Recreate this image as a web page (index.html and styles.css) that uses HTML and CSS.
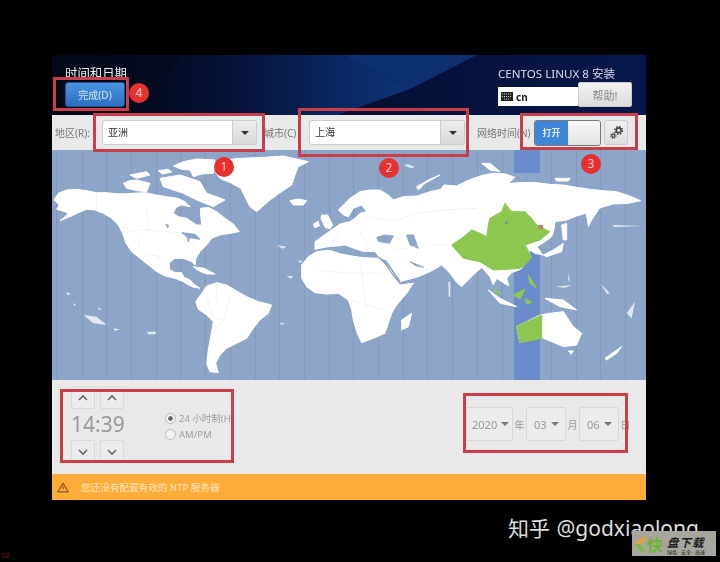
FILE: index.html
```html
<!DOCTYPE html>
<html lang="zh-CN">
<head>
  <meta charset="UTF-8">
  <meta name="viewport" content="width=device-width, initial-scale=1.0">
  <title>时间和日期</title>
  <link rel="stylesheet" href="styles.css">
</head>
<body>
  <div class="window">
    <header class="header">
      <svg class="header-art" viewBox="0 0 594 60" preserveAspectRatio="none">
        <defs>
          <linearGradient id="art" x1="0" x2="1" y1="0" y2="0">
            <stop offset="0" stop-color="#06103a" stop-opacity="0"/>
            <stop offset="0.7" stop-color="#0a2560"/>
            <stop offset="1" stop-color="#0e3478"/>
          </linearGradient>
        </defs>
        <polygon points="130,0 291,0 358,34 285,60 90,60" fill="url(#art)"/>
        <polygon points="291,0 425,0 358,34" fill="#0c2f70"/>
      </svg>
      <div class="header-left">
        <h1 class="title">时间和日期</h1>
        <button class="done">完成(D)</button>
      </div>
      <div class="header-right">
        <div class="product">CENTOS LINUX 8 安装</div>
        <div class="header-row">
          <div class="layout">
            <svg class="kbd" viewBox="0 0 12 9"><rect width="12" height="9" fill="#222"/><path d="M1 2h10M1 4.5h10M3 7h6" stroke="#ddd" stroke-width="1" stroke-dasharray="1 1" fill="none"/></svg>
            <span>cn</span>
          </div>
          <button class="help">帮助!</button>
        </div>
      </div>
    </header>

    <div class="toolbar">
      <label class="tool-label region-label">地区(R):</label>
      <div class="combo region"><span>亚洲</span><i class="combo-arrow"></i></div>
      <label class="tool-label city-label">城市(C)</label>
      <div class="combo city"><span>上海</span><i class="combo-arrow"></i></div>
      <label class="tool-label net-label">网络时间(N)</label>
      <div class="switch"><span class="switch-on">打开</span><span class="switch-off"></span></div>
      <button class="gear">
        <svg viewBox="0 0 16 16" width="15" height="15">
          <circle cx="10.3" cy="5.7" r="2.6" fill="none" stroke="#444" stroke-width="1.8"/>
          <circle cx="10.3" cy="5.7" r="4.2" fill="none" stroke="#444" stroke-width="1.4" stroke-dasharray="1.6 1.7"/>
          <circle cx="4.6" cy="11.4" r="1.7" fill="none" stroke="#444" stroke-width="1.4"/>
          <circle cx="4.6" cy="11.4" r="3" fill="none" stroke="#444" stroke-width="1" stroke-dasharray="1.2 1.2"/>
        </svg>
      </button>
    </div>

    <div class="map">
      <svg class="map-art" viewBox="0 0 594 230">
        <rect x="462" y="0" width="26" height="23" fill="#6a8ccb"/>
        <rect x="462" y="95" width="26" height="135" fill="#6a8ccb"/>

        <!-- americas, greenland -->
        <g transform="translate(-2 0) scale(.3333)" class="land">
          <path d="M12 150L25 130 50 120 80 118 110 122 140 128 170 128 210 132 245 130 285 128 320 135 350 140 385 145 405 155 420 170 395 165 378 172 370 190 385 200 410 205 440 225 455 225 452 195 452 175 475 172 500 185 525 205 550 222 568 245 540 250 510 255 485 265 470 285 450 305 438 325 435 345 425 335 400 325 375 325 358 338 358 358 375 368 395 368 402 382 420 390 435 405 450 415 425 410 400 395 375 385 345 378 320 365 295 345 270 325 245 305 228 280 218 250 205 225 185 205 160 190 135 180 110 178 85 188 60 200 30 212 55 192 45 185 20 178 28 165Z"/>
          <path d="M220 100L240 92 260 90 300 100 290 125 260 122 230 115Z"/>
          <path d="M240 75L290 65 300 75 260 85Z"/>
          <path d="M325 62l30-4 10 8-28 6Z"/>
          <path d="M370 48L400 35 440 27 495 30 490 70 455 72 430 80 420 60 395 58Z"/>
          <path d="M330 85L390 75 430 88 450 95 470 130 500 140 525 150 490 170 465 160 440 150 400 130 340 110Z"/>
          <path d="M495 45L520 30 570 25 640 22 700 18 775 35 745 50 735 75 725 105 695 125 660 150 620 185 600 170 585 140 572 115 545 100 510 85 495 65Z"/>
          <path d="M720 152L745 147 770 152 760 165 730 165Z"/>
          <path d="M437 455L455 430 470 408 500 398 530 405 555 420 590 440 625 455 665 465 655 490 630 510 610 535 590 565 560 580 530 595 510 615 497 640 505 668 480 665 470 640 475 600 482 560 490 515 470 495 445 478Z"/>
          <path d="M430 350L462 355 495 372 470 372 445 362Z"/>
          <path d="M790 222l15-8 3 14-14 5Z"/>
          <path d="M100 495L140 500 170 525 130 520ZM70 460l8 3-5 6ZM190 535l20 3-15 5ZM50 425l12 8-10 3ZM145 472l10 6-10 2ZM290 545l30 0-5 8-20 0ZM710 378l20 0-8 8ZM690 518l15 2-10 5ZM680 285l30 5-12 6ZM745 330l15 5-12 3Z" class="isles"/>
          <path d="M395 248l40 5 15 15-30-5-5 12-5-15ZM348 222l8 4-3 8Z" class="lake"/>
          <path d="M140 128L140 182M218 245L280 240 360 245 395 250M290 175L295 240M260 265L275 310 330 320 370 330M410 260L440 300M470 440L490 510 520 510 540 440M480 560L530 500M500 400L500 455" class="border"/>
        </g>
        <!-- europe, asia, africa, oceania -->
        <g transform="translate(298 0) scale(.3333)" class="land">
          <path d="M-105 275L-70 250 -30 222 0 215 15 205 30 190 50 185 35 165 10 175 -5 200 -20 195 -35 180 -15 160 0 145 30 125 60 120 90 120 115 135 130 150 160 140 200 138 240 125 272 118 282 105 320 108 345 95 370 85 400 75 430 70 465 72 495 82 475 100 510 98 550 97 600 103 640 105 680 112 720 118 760 122 800 125 840 138 872 152 835 160 790 162 755 172 730 185 715 215 708 190 680 198 650 210 615 215 612 240 605 260 585 275 562 290 578 315 555 310 540 300 530 335 512 358 485 368 470 385 477 408 455 395 440 385 430 405 420 380 395 352 370 375 335 410 318 395 300 370 275 345 240 365 205 380 150 395 125 365 105 330 80 315 70 305 40 305 10 295 -15 285 -50 290 -75 292 -105 298Z"/>
          <path d="M-145 345L-125 320 -100 305 -60 300 -30 310 0 315 40 320 70 318 85 325 105 345 125 375 150 405 190 400 170 430 140 465 125 490 115 520 105 550 70 565 35 578 20 545 10 510 5 480 -5 450 -35 430 -70 432 -105 428 -130 410 -145 385Z"/>
          <path d="M-85 195l18 0 15 30-8 12-15-5-12-25Z"/>
          <path d="M-80 296L-50 292 -15 290 10 298 40 308 75 308 85 322 40 320 0 314 -30 308 -60 298ZM80 262L105 255 130 258 118 280 85 274ZM170 255L190 255 205 295 180 285ZM180 335L220 352 195 346Z" class="lake"/>
          <path d="M105 330L150 395" class="strait"/>
          <path d="M155 510L185 490 175 530 155 540Z"/>
          <path d="M580 315L610 300 640 280 635 305 590 320Z"/>
          <path d="M635 225L650 220 650 270 640 270Z"/>
          <path d="M710 190L745 180 725 210 715 230Z"/>
          <path d="M200 110L235 90 270 75 225 100 205 120Z"/>
          <path d="M395 40L420 40 450 65 420 60Z"/>
          <path d="M615 85l45 0-5 8-35 0Z"/>
          <path d="M415 420L450 445 500 470 450 460Z"/>
          <path d="M585 445L640 450 680 480 630 470Z"/>
          <path d="M500 530L570 495 600 490 640 485 670 530 695 550 680 585 640 590 570 560 510 578Z"/>
          <path d="M655 603l15 0-6 10Z"/>
          <path d="M765 625L815 590 800 610 770 630Z"/>
          <path d="M160 45l15-2 20 8-12 4ZM295 395l6 0 0 45-5 0ZM790 225l90 3-90 3ZM750 400l30 30-8 2ZM830 490l25-35-10 50ZM615 410l50-5-20 8ZM655 365l5 30-5-5Z" class="isles"/>
          <path d="M60 200L130 215 200 190 280 180 380 175M-60 290L-30 240M30 240L60 300M130 300L220 285 300 285M-100 360L0 370 100 370M30 330L50 480M0 450L100 480" class="border"/>
          <g class="green">
            <path d="M305 285L335 265 365 240 390 250 410 260 415 225 420 205 455 185 465 160 485 185 525 185 545 205 560 225 600 245 570 270 525 285 545 320 525 345 510 355 470 358 430 360 390 335 340 325Z"/>
            <path d="M500 530L575 495 575 565 510 578Z"/>
            <path d="M535 375l25 40-20-15ZM490 435l35-18-15 30ZM525 445l20 12-15 5ZM435 418l15 10-8 5Z"/>
          </g>
          <path d="M465 220l8-10-2 14Z" class="tiny-lake"/>
          <circle cx="573" cy="231" r="7" class="pin"/>
          <circle cx="573" cy="231" r="3" class="pin-core"/>
        </g>
      </svg>
    </div>

    <div class="controls">
      <div class="clock">
        <div class="spin-row">
          <button class="spin"><svg class="chev" viewBox="0 0 12 8"><path d="M2 6l4-4 4 4"/></svg></button>
          <button class="spin"><svg class="chev" viewBox="0 0 12 8"><path d="M2 6l4-4 4 4"/></svg></button>
        </div>
        <div class="time">14:39</div>
        <div class="spin-row">
          <button class="spin"><svg class="chev" viewBox="0 0 12 8"><path d="M2 2l4 4 4-4"/></svg></button>
          <button class="spin"><svg class="chev" viewBox="0 0 12 8"><path d="M2 2l4 4 4-4"/></svg></button>
        </div>
      </div>
      <div class="format">
        <div class="radio-row"><i class="radio radio-on"></i><span>24 小时制(H)</span></div>
        <div class="radio-row"><i class="radio"></i><span>AM/PM</span></div>
      </div>
      <div class="date">
        <div class="pick pick-year"><span>2020</span><i class="pick-arrow"></i></div>
        <span class="date-unit">年</span>
        <div class="pick"><span>03</span><i class="pick-arrow"></i></div>
        <span class="date-unit">月</span>
        <div class="pick"><span>06</span><i class="pick-arrow"></i></div>
        <span class="date-unit">日</span>
      </div>
    </div>

    <div class="warning">
      <svg class="warn-icon" viewBox="0 0 14 12"><path d="M7 1L13 11H1Z" fill="none" stroke="#8a5a20" stroke-width="1.4"/><path d="M7 4.5v3.5" stroke="#c0392b" stroke-width="1.4"/></svg>
      <span>您还没有配置有效的 NTP 服务器</span>
    </div>
  </div>

  <div class="mark box-4"></div>
  <div class="mark box-1"></div>
  <div class="mark box-2"></div>
  <div class="mark box-3"></div>
  <div class="mark box-time"></div>
  <div class="mark box-date"></div>
  <div class="dot dot-1">1</div>
  <div class="dot dot-2">2</div>
  <div class="dot dot-3">3</div>
  <div class="dot dot-4">4</div>

  <div class="credit">知乎 @godxiaolong</div>
  <div class="logo">
    <svg class="logo-icon" viewBox="0 0 14 20"><polygon points="13,1 2,11 8,11 13,6" fill="#f0a030"/><polygon points="2,11 8,11 13,19 8,19" fill="#7fb83a"/></svg>
    <span class="logo-kuai">快</span>
    <div class="logo-text">
      <div class="logo-name">盘下载</div>
      <div class="logo-sub">绿色 · 安全 · 高速</div>
    </div>
  </div>
  <div class="corner">sd:</div>
</body>
</html>
```

FILE: styles.css
```css
* {
  box-sizing: border-box;
}

html, body {
  height: 100%;
}

body {
  margin: 0;
  padding: 55px 74px 0 52px;
  background: #000;
  font-family: "Noto Sans", "Noto Sans CJK SC", sans-serif;
  overflow: hidden;
  position: relative;
}

button {
  font-family: inherit;
  padding: 0;
}

.window {
  width: 594px;
  height: 445px;
  display: flex;
  flex-direction: column;
  filter: blur(0.35px);
}

/* header */

.header {
  height: 60px;
  padding: 11px 14px 8px 13px;
  display: flex;
  justify-content: space-between;
  background: linear-gradient(to right, #030816, #040d2c 40%, #06133f 75%, #08184c);
  position: relative;
}

.header-art {
  position: absolute;
  left: 0;
  top: 0;
  width: 100%;
  height: 100%;
}

.header-left, .header-right {
  position: relative;
}

.title {
  margin: 0;
  font-size: 12.4px;
  font-weight: normal;
  line-height: 16px;
  color: #eee;
}

.done {
  display: block;
  width: 60px;
  height: 25px;
  border: 1px solid #1f4f90;
  border-radius: 3px;
  background: linear-gradient(#4a94e0, #2c6fc0);
  color: #d5e6f8;
  font-size: 10px;
}

.header-right {
  width: 134px;
}

.product {
  font-size: 11.6px;
  line-height: 16px;
  color: #dde;
  white-space: nowrap;
}

.header-row {
  display: flex;
  align-items: flex-end;
  height: 25px;
}

.layout {
  width: 80px;
  height: 19px;
  margin-bottom: 1px;
  padding-left: 3px;
  background: #fff;
  display: flex;
  align-items: center;
  gap: 3px;
  font-size: 10px;
  font-weight: bold;
  color: #222;
}

.kbd {
  width: 12px;
  height: 9px;
}

.help {
  width: 54px;
  height: 25px;
  border: 1px solid #ccc;
  border-radius: 2px;
  background: linear-gradient(#f2f2f2, #dcdcdc);
  color: #888;
  font-size: 11px;
}

/* toolbar */

.toolbar {
  height: 35px;
  display: flex;
  align-items: center;
  background: #e9e9e9;
  padding: 0 18px 0 3px;
}

.tool-label {
  font-size: 10px;
  color: #777;
  white-space: nowrap;
}

.region-label {
  width: 47px;
}

.city-label {
  width: 45px;
  margin-left: 7px;
}

.net-label {
  width: 57px;
  margin-left: 12px;
}

.combo {
  height: 25px;
  display: flex;
  justify-content: space-between;
  background: #fff;
  border: 1px solid #ccc;
  border-radius: 3px;
  font-size: 10px;
  color: #333;
}

.combo span {
  padding-left: 5px;
  line-height: 23px;
}

.region {
  width: 155px;
}

.city {
  width: 156px;
}

.combo-arrow {
  width: 24px;
  background: linear-gradient(#eee, #d8d8d8);
  border-left: 1px solid #ccc;
  position: relative;
}

.combo-arrow::after {
  content: "";
  position: absolute;
  left: 8px;
  top: 10px;
  border: 4px solid transparent;
  border-top: 4px solid #333;
  border-bottom: 0;
}

.switch {
  width: 67px;
  height: 26px;
  display: flex;
  border: 1px solid #777;
  border-radius: 3px;
  overflow: hidden;
}

.switch-on {
  width: 33px;
  background: #3f86d6;
  color: #e6f0fa;
  font-size: 9px;
  font-weight: bold;
  line-height: 24px;
  text-align: center;
}

.switch-off {
  flex: 1;
  background: linear-gradient(#f7f7f7, #e2e2e2);
}

.gear {
  width: 24px;
  height: 25px;
  margin-left: 3px;
  border: 1px solid #ccc;
  border-radius: 3px;
  background: linear-gradient(#f0f0f0, #dedede);
  display: flex;
  align-items: center;
  justify-content: center;
}

/* map */

.map {
  height: 230px;
  background-color: #8da5c8;
  background-image: repeating-linear-gradient(to right, transparent 0, transparent 23.7px, #8199bd 23.7px, #8199bd 24.7px);
  background-position: 6px 0;
}

.map-art {
  display: block;
  width: 594px;
  height: 230px;
  filter: blur(0.4px);
}

.land path {
  fill: #fff;
  stroke: #fff;
  stroke-width: 3;
  stroke-linejoin: round;
}

.land .isles {
  opacity: 0.75;
  stroke: none;
}

.land .lake {
  fill: #8da5c8;
  stroke: #8da5c8;
}

.land .strait {
  fill: none;
  stroke: #8da5c8;
  stroke-width: 5;
}

.land .border {
  fill: none;
  stroke: #e2e4e8;
  stroke-width: 1.5;
}

.land .green path {
  fill: #8cc850;
  stroke: #8cc850;
}

.land .tiny-lake {
  fill: #5f87b8;
  stroke: none;
}

.pin {
  fill: #d8605a;
}

.pin-core {
  fill: #8cc850;
}

/* time and date */

.controls {
  height: 94px;
  padding-top: 6px;
  display: flex;
  background: #e9e9e9;
}

.clock {
  margin-left: 19px;
  width: 54px;
}

.spin-row {
  display: flex;
  gap: 5px;
}

.spin {
  width: 24px;
  height: 23px;
  border: 1px solid #dadada;
  border-radius: 2px;
  background: #ececec;
  display: flex;
  align-items: center;
  justify-content: center;
}

.chev {
  width: 12px;
  height: 8px;
}

.chev path {
  fill: none;
  stroke: #666;
  stroke-width: 1.6;
}

.time {
  height: 31px;
  font-size: 21px;
  line-height: 31px;
  color: #999;
  white-space: nowrap;
}

.format {
  margin-left: 40px;
  margin-top: 24px;
  width: 69px;
  overflow: hidden;
}

.radio-row {
  height: 16px;
  display: flex;
  align-items: center;
  gap: 3px;
  font-size: 9.5px;
  color: #a0a0a0;
  white-space: nowrap;
}

.radio {
  flex: none;
  width: 11px;
  height: 11px;
  border: 1px solid #bbb;
  border-radius: 50%;
  background: #f2f2f2;
}

.radio-on {
  background: radial-gradient(circle, #666 0 2px, #f2f2f2 2.5px);
}

.date {
  margin-left: 232px;
  margin-top: 21px;
  height: 34px;
  display: flex;
  align-items: center;
  font-size: 11px;
  color: #999;
}

.pick {
  width: 40px;
  height: 34px;
  padding-left: 7px;
  display: flex;
  align-items: center;
  gap: 4px;
  border: 1px solid #d8d8d8;
  border-radius: 2px;
  background: #ececec;
}

.pick-year {
  width: 47px;
  padding-left: 5px;
}

.pick-arrow {
  border: 4px solid transparent;
  border-top: 4px solid #777;
  border-bottom: 0;
}

.date-unit {
  width: 13px;
  text-align: center;
  font-size: 10px;
}

/* warning */

.warning {
  height: 26px;
  padding-left: 5px;
  display: flex;
  align-items: center;
  background: #ffad3a;
  color: #fbe6c0;
  font-size: 9.6px;
}

.warn-icon {
  width: 12px;
  height: 11px;
  margin-right: 12px;
}

/* annotations over the screenshot */

.mark {
  position: absolute;
  border: 3px solid #c93f49;
}

.box-4 {
  left: 53px;
  top: 77px;
  width: 76px;
  height: 34px;
}

.box-1 {
  left: 93px;
  top: 113px;
  width: 172px;
  height: 39px;
}

.box-2 {
  left: 298px;
  top: 108px;
  width: 171px;
  height: 49px;
}

.box-3 {
  left: 520px;
  top: 113px;
  width: 118px;
  height: 37px;
}

.box-time {
  left: 60px;
  top: 389px;
  width: 174px;
  height: 74px;
}

.box-date {
  left: 463px;
  top: 393px;
  width: 165px;
  height: 60px;
}

.dot {
  position: absolute;
  width: 20px;
  height: 20px;
  border-radius: 50%;
  background: #e8302e;
  color: #f8d0c8;
  font-size: 12px;
  line-height: 20px;
  text-align: center;
}

.dot-1 {
  left: 214px;
  top: 157px;
}

.dot-2 {
  left: 379px;
  top: 158px;
}

.dot-3 {
  left: 581px;
  top: 154px;
}

.dot-4 {
  left: 129px;
  top: 83px;
}

/* stamps on the black area */

.credit {
  position: absolute;
  left: 508px;
  top: 520px;
  height: 16px;
  font-size: 21px;
  line-height: 16px;
  word-spacing: 1px;
  color: #ddd;
  white-space: nowrap;
}

.logo {
  position: absolute;
  left: 632px;
  top: 531px;
  width: 84px;
  height: 25px;
  padding: 5px 0 0 1px;
  display: flex;
  align-items: flex-start;
  background: #a6a69e;
}

.logo-icon {
  flex: none;
  width: 13px;
  height: 20px;
  margin-top: -3px;
}

.logo-kuai {
  flex: none;
  width: 18px;
  height: 18px;
  font-size: 16px;
  line-height: 18px;
  font-weight: bold;
  text-align: center;
  color: #6fb52f;
}

.logo-text {
  margin-left: 3px;
  color: #1a1a1a;
}

.logo-name {
  height: 13px;
  font-size: 11.5px;
  line-height: 13px;
  font-weight: bold;
  font-style: italic;
  letter-spacing: 1px;
  overflow: hidden;
}

.logo-sub {
  height: 7px;
  font-size: 5px;
  line-height: 7px;
  white-space: nowrap;
  overflow: hidden;
}

.corner {
  position: absolute;
  left: 1px;
  top: 549px;
  font-size: 8px;
  color: #5a1a1a;
}
```
